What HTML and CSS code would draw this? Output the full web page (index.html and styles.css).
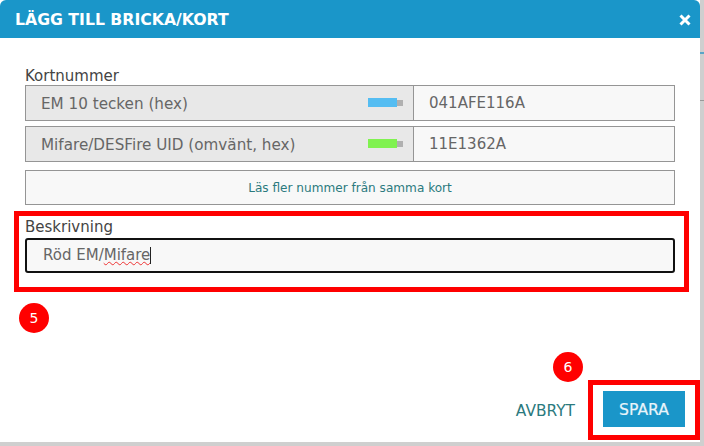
FILE: index.html
```html
<!DOCTYPE html>
<html lang="en">
<head>
    <meta charset="UTF-8">
    <meta name="viewport" content="width=device-width, initial-scale=1.0">
    <title>Lägg till bricka/kort</title>
    <link rel="stylesheet" href="styles.css">
</head>
<body>
    <span class="behind behind-blue"></span>
    <span class="behind behind-grey"></span>
    <div class="dialog">
        <div class="dialog-header">
            <h1>LÄGG TILL BRICKA/KORT</h1>
            <svg class="close-icon" width="12" height="12" viewBox="0 0 12 12">
                <path d="M1.5 1.5 L10.5 10.5 M10.5 1.5 L1.5 10.5" stroke="#fff" stroke-width="3"/>
            </svg>
        </div>
        <div class="dialog-body">
            <div class="field-label">Kortnummer</div>
            <div class="number-row">
                <div class="number-type">
                    <span>EM 10 tecken (hex)</span>
                    <span class="chip"><span class="chip-color chip-blue"></span><span class="chip-end"></span></span>
                </div>
                <div class="number-value">041AFE116A</div>
            </div>
            <div class="number-row">
                <div class="number-type">
                    <span>Mifare/DESFire UID (omvänt, hex)</span>
                    <span class="chip"><span class="chip-color chip-green"></span><span class="chip-end"></span></span>
                </div>
                <div class="number-value">11E1362A</div>
            </div>
            <div class="read-more">Läs fler nummer från samma kort</div>

            <div class="highlight highlight-desc">
                <div class="field-label">Beskrivning</div>
                <div class="desc-input">Röd EM/<span class="misspelled">Mifare</span><span class="caret"></span></div>
            </div>
            <div class="step step-5">5</div>

            <div class="dialog-footer">
                <div class="step step-6">6</div>
                <a class="cancel">AVBRYT</a>
                <div class="highlight highlight-save">
                    <button class="save">SPARA</button>
                </div>
            </div>
        </div>
    </div>
</body>
</html>
```

FILE: styles.css
```css
html, body {
    margin: 0;
    padding: 0;
}
body {
    position: relative;
    width: 704px;
    height: 446px;
    overflow: hidden;
    background: #cfcfcf;
    font-family: "DejaVu Sans", sans-serif;
    color: #444;
}
/* bits of the page behind the dialog */
.behind {
    position: absolute;
    left: 700px;
    width: 4px;
    height: 2px;
}
.behind-blue { top: 52px; background: #5aa5c8; }
.behind-grey { top: 100px; height: 1px; background: #999; }
.dialog {
    width: 700px;
    height: 442px;
    background: #fff;
}
.dialog-header {
    height: 38px;
    background: #1a96c9;
    display: flex;
    align-items: center;
    justify-content: space-between;
    padding: 0 9px 0 15px;
    border-radius: 6px 6px 0 0;
}
.dialog-header h1 {
    margin: 1px 0 0;
    font-size: 15.7px;
    font-weight: bold;
    color: #fff;
}
.close-icon {
    display: block;
    margin-top: 1px;
}
.dialog-body {
    padding: 29px 25px 0 25px;
}
.field-label {
    font-size: 15px;
    line-height: 18px;
    color: #444;
}
.number-row {
    display: flex;
    height: 36px;
    box-sizing: border-box;
    border: 1px solid #959595;
    margin-bottom: 5px;
    font-size: 15.2px;
    color: #666;
}
.number-type {
    width: 388px;
    background: #e8e8e8;
    border-right: 1px solid #959595;
    display: flex;
    align-items: center;
    justify-content: space-between;
    padding: 1px 10px 0 15px;
    box-sizing: border-box;
}
.chip {
    display: flex;
    align-items: center;
    margin-top: -2px;
}
.chip-color {
    width: 29px;
    height: 9px;
}
.chip-blue { background: #55bdf2; }
.chip-green { background: #80f250; }
.chip-end {
    width: 6px;
    height: 6px;
    background: #b0b0b0;
}
.number-value {
    flex: 1;
    background: #f8f8f8;
    padding-left: 15px;
    line-height: 35px;
    font-size: 15px;
}
.read-more {
    height: 35px;
    box-sizing: border-box;
    border: 1px solid #959595;
    background: #f8f8f8;
    margin-top: 8px;
    text-align: center;
    line-height: 34px;
    font-size: 12.1px;
    color: #2b7a7e;
}
.highlight {
    border: 5px solid #f00;
    box-sizing: border-box;
}
.highlight-desc {
    margin: 6px -14px 0 -11px;
    height: 81px;
    padding: 2px 0 0 6px;
}
.desc-input {
    width: 650px;
    height: 35px;
    box-sizing: border-box;
    border: 2px solid #111;
    border-radius: 3px;
    background: #f8f8f8;
    padding-left: 16px;
    line-height: 31px;
    font-size: 15px;
    color: #666;
    margin-top: 2px;
}
.misspelled {
    text-decoration: underline wavy #e33;
    text-decoration-thickness: 1px;
}
.caret {
    display: inline-block;
    width: 1px;
    height: 17px;
    background: #222;
    vertical-align: -4px;
}
.step {
    width: 30px;
    height: 30px;
    border-radius: 50%;
    background: #f00;
    color: #fff;
    font-size: 14px;
    text-align: center;
    line-height: 30px;
}
.step-5 {
    margin: 11px 0 0 -6px;
}
.dialog-footer {
    position: relative;
    display: flex;
    justify-content: flex-end;
    align-items: center;
    gap: 13px;
    margin-top: 47px;
    margin-right: -25px;
}
.step-6 {
    position: absolute;
    left: 528px;
    top: -28px;
}
.cancel {
    font-size: 15.4px;
    color: #2b7a7e;
    margin-top: 1px;
}
.highlight-save {
    padding: 6px 10px;
    width: 112px;
    height: 60px;
}
.save {
    display: block;
    width: 82px;
    height: 36px;
    border: 0;
    background: #1a96c9;
    color: #e8f4fa;
    font-family: inherit;
    font-size: 15.6px;
    -webkit-text-stroke: 0.2px #e8f4fa;
    padding: 2px 0 0;
}
```
